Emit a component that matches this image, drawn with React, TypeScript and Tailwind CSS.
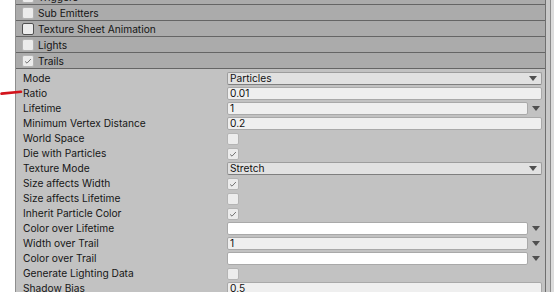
import React from "react"

type Kind = "dropdown" | "text" | "textArrow" | "check" | "colorArrow"

type Row = { label: string; kind: Kind; value?: string; checked?: boolean }

const rows: Row[] = [
  { label: "Mode", kind: "dropdown", value: "Particles" },
  { label: "Ratio", kind: "text", value: "0.01" },
  { label: "Lifetime", kind: "textArrow", value: "1" },
  { label: "Minimum Vertex Distance", kind: "text", value: "0.2" },
  { label: "World Space", kind: "check", checked: false },
  { label: "Die with Particles", kind: "check", checked: true },
  { label: "Texture Mode", kind: "dropdown", value: "Stretch" },
  { label: "Size affects Width", kind: "check", checked: true },
  { label: "Size affects Lifetime", kind: "check", checked: false },
  { label: "Inherit Particle Color", kind: "check", checked: true },
  { label: "Color over Lifetime", kind: "colorArrow" },
  { label: "Width over Trail", kind: "textArrow", value: "1" },
  { label: "Color over Trail", kind: "colorArrow" },
  { label: "Generate Lighting Data", kind: "check", checked: false },
  { label: "Shadow Bias", kind: "text", value: "0.5" },
]

const headers = [
  { label: "Triggers", checked: false, hover: false },
  { label: "Sub Emitters", checked: false, hover: false },
  { label: "Texture Sheet Animation", checked: false, hover: true },
  { label: "Lights", checked: false, hover: false },
  { label: "Trails", checked: true, hover: false },
]

function Tick() {
  return (
    <svg viewBox="0 0 12 12" className="h-[12px] w-[12px]">
      <path d="M2.5 6.5 L4.8 8.6 L9.5 3.6" fill="none" stroke="#4a4a4a" strokeWidth="0.9" />
    </svg>
  )
}

function Arrow() {
  return (
    <svg viewBox="0 0 8 5" className="h-[5px] w-[8px]">
      <path d="M0 0 H8 L4 5 Z" fill="#4f4f4f" />
    </svg>
  )
}

function Check({ on, hover }: { on?: boolean; hover?: boolean }) {
  return (
    <div
      className={
        "flex h-[12px] w-[12px] items-center justify-center rounded-[2px] border bg-[#ececec] " +
        (hover ? "border-[#505050]" : "border-[#b4b4b4]")
      }
    >
      {on && <Tick />}
    </div>
  )
}

function Field({ row }: { row: Row }) {
  if (row.kind === "check") return <Check on={row.checked} />
  if (row.kind === "dropdown")
    return (
      <div className="flex h-[13px] w-full items-center justify-between rounded-[2px] border border-[#9d9d9d] border-b-[#7f7f7f] bg-[#e1e1e1] pl-[2px] pr-[4px]">
        <span>{row.value}</span>
        <Arrow />
      </div>
    )
  if (row.kind === "text")
    return (
      <div className="flex h-[13px] w-full items-center rounded-[2px] border border-[#a9a9a9] bg-[#efefef] pl-[2px]">
        {row.value}
      </div>
    )
  return (
    <div className="flex w-full items-center">
      <div
        className={
          "flex h-[13px] flex-1 items-center rounded-[2px] border border-[#a9a9a9] pl-[2px] " +
          (row.kind === "colorArrow" ? "bg-white" : "bg-[#efefef]")
        }
      >
        {row.value}
      </div>
      <div className="flex w-[14px] justify-center pl-[2px]">
        <Arrow />
      </div>
    </div>
  )
}

export default function App() {
  return (
    <div
      className="relative flex h-[292px] w-[554px] overflow-hidden bg-white text-[10.2px] leading-none text-[#111]"
      style={{ fontFamily: "Inter, 'Liberation Sans', sans-serif" }}
    >
      <div className="w-[15px]" />
      <div className="flex w-[531px] flex-col border-x border-l-[#8e8e8e] border-r-[#6f6f6f]">
        <div className="-mt-[11px] flex flex-col">
          {headers.map((h) => (
            <div
              key={h.label}
              className="flex h-[16px] items-center gap-[4px] border-b border-[#656565] bg-[#ababab] pl-[6px]"
            >
              <Check on={h.checked} hover={h.hover} />
              <span className="relative top-[1px] text-[#141414]">{h.label}</span>
            </div>
          ))}
        </div>
        <div className="h-[1px] bg-[#b6b6b6]" />
        <div className="flex flex-1 flex-col bg-[#c2c2c2] pt-[2px] pr-[3px]">
          {rows.map((r) => (
            <div key={r.label} className="flex h-[15px] items-center">
              <div className="w-[211px] pl-[7px] text-[#161616]">{r.label}</div>
              <div className="flex flex-1 items-center">
                <Field row={r} />
              </div>
            </div>
          ))}
        </div>
      </div>
      <div className="w-[4px] bg-[#c8c8c8]" />
      <div className="w-[1px] bg-[#8a8a8a]" />
      <div className="flex-1 bg-[#dcdcdc]" />
      <svg className="absolute left-0 top-[88px] h-[8px] w-[24px]" viewBox="0 0 24 8">
        <path d="M1.5 5.6 L21 3.8" stroke="#d3141c" strokeWidth="2.6" strokeLinecap="round" fill="none" />
      </svg>
    </div>
  )
}
